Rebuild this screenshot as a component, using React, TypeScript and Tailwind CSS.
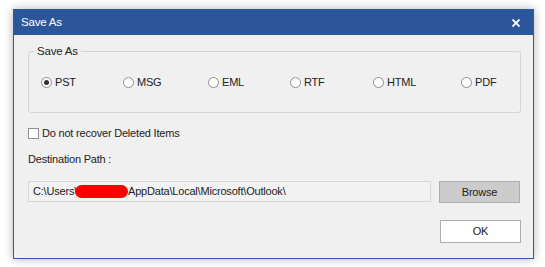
import { useState } from 'react';

const formats = [
    { label: 'PST', w: 'w-[82px]' },
    { label: 'MSG', w: 'w-[85px]' },
    { label: 'EML', w: 'w-[82px]' },
    { label: 'RTF', w: 'w-[83px]' },
    { label: 'HTML', w: 'w-[88px]' },
    { label: 'PDF', w: 'w-auto' },
];

const Radio = ({ checked }: { checked: boolean }) => (
    <span className="w-[11px] h-[11px] rounded-full border border-[#8f8f8f] bg-white flex items-center justify-center shrink-0">
        {checked && <span className="w-[5px] h-[5px] rounded-full bg-[#333]"></span>}
    </span>
);

export default function App() {
    const [format, setFormat] = useState('PST');
    const [skipDeleted, setSkipDeleted] = useState(false);

    return (
        <div
            className="w-[545px] h-[267px] bg-white pt-[9px] pl-[13px] text-[11px] tracking-[-0.2px] text-[#222]"
            style={{ fontFamily: '"Liberation Sans", Arial, sans-serif' }}
        >
            <div className="w-[521px] h-[250px] border border-[#2b5aa6] flex flex-col shadow-[0_0_9px_rgba(0,0,0,0.3)]">
                {/* title bar */}
                <div className="h-[25px] bg-[#2b579a] flex items-center justify-between pl-[7px] pr-[13px] shrink-0">
                    <span className="text-white text-[11.5px] leading-none">Save As</span>
                    <svg width="8" height="8" viewBox="0 0 8 8">
                        <path d="M0.5 0.5 L7.5 7.5 M7.5 0.5 L0.5 7.5" stroke="white" strokeWidth="1.8" />
                    </svg>
                </div>

                <div className="flex-1 bg-[#f0f0f0] pl-[14px] pr-[12px] flex flex-col">
                    <fieldset className="mt-[9px] h-[69px] border border-[#d5d5d5] rounded-[3px] px-[12px]">
                        <legend className="ml-[-7px] px-[3px] leading-[14px] text-[11.5px]">Save As</legend>
                        <div className="flex items-center h-[14px] mt-[17px]">
                            {formats.map(f => (
                                <label
                                    key={f.label}
                                    className={`${f.w} flex items-center gap-[3px] cursor-default`}
                                    onClick={() => setFormat(f.label)}
                                >
                                    <Radio checked={format === f.label} />
                                    <span className="leading-[14px]">{f.label}</span>
                                </label>
                            ))}
                        </div>
                    </fieldset>

                    <label className="flex items-center gap-[3px] h-[14px] mt-[13px]" onClick={() => setSkipDeleted(!skipDeleted)}>
                        <span className="w-[11px] h-[11px] border border-[#8f8f8f] bg-white flex items-center justify-center">
                            {skipDeleted && <span className="w-[5px] h-[5px] bg-[#333]"></span>}
                        </span>
                        <span>Do not recover Deleted Items</span>
                    </label>

                    <div className="h-[14px] leading-[14px] mt-[12px]">Destination Path :</div>

                    <div className="flex items-start gap-[8px] mt-[15px]">
                        <div className="w-[403px] h-[21px] border border-[#d6d6d6] bg-[#f2f2f2] flex items-center pl-[4px] whitespace-nowrap overflow-hidden">
                            <span>C:\Users\</span>
                            <span className="inline-block w-[53px] h-[13px] rounded-full bg-[#ff0000] -ml-[2px]"></span>
                            <span>AppData\Local\Microsoft\Outlook\</span>
                        </div>
                        <button className="w-[81px] h-[22px] bg-[#cccccc] border border-[#adadad] text-[11px] text-[#222]">Browse</button>
                    </div>

                    <div className="flex justify-end mt-[17px]">
                        <button className="w-[81px] h-[23px] bg-white border border-[#adadad] text-[11px] text-[#222]">OK</button>
                    </div>
                </div>
            </div>
        </div>
    );
}
